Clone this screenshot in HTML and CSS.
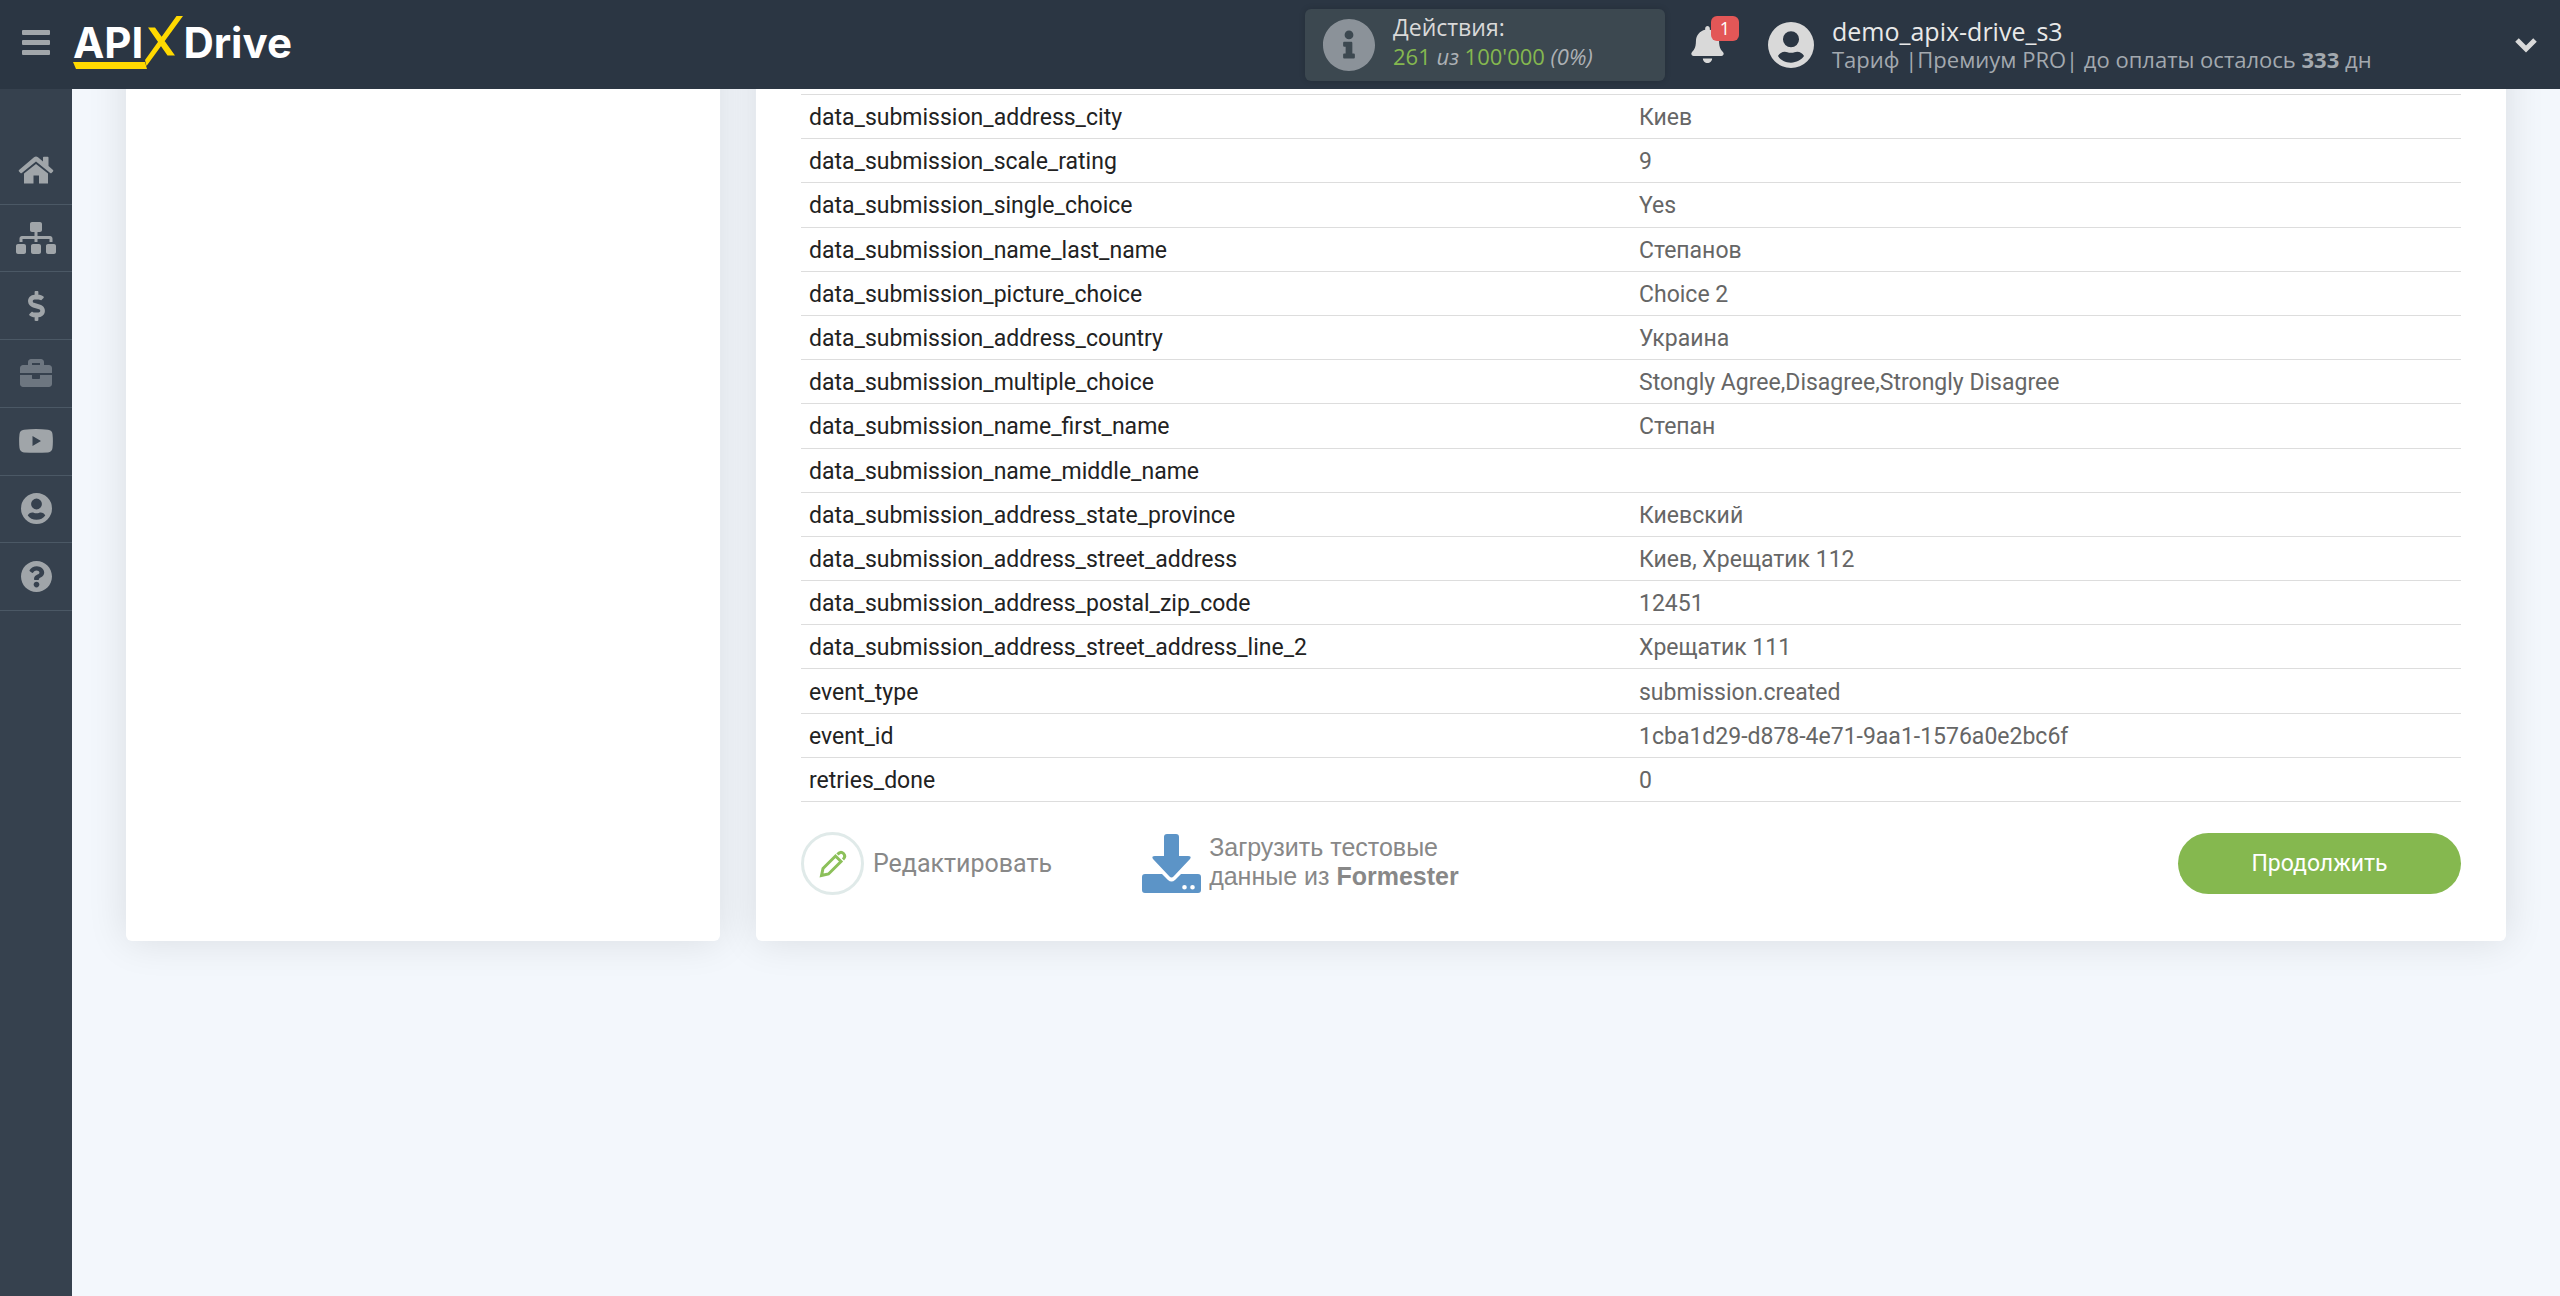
FILE: index.html
```html
<!DOCTYPE html>
<html lang="ru">
<head>
<meta charset="utf-8">
<title>ApiX-Drive</title>
<link rel="stylesheet" href="styles.css">
</head>
<body>
<header class="topbar">
  <button class="menu-toggle" type="button" aria-label="Меню"><span></span><span></span><span></span></button>
  <a class="logo" href="#">
    <span>API</span>
    <svg class="logo-x" width="40" height="56" viewBox="0 0 40 56" aria-hidden="true"><path d="M2 45L33.500 1H40L3.500 51ZM5 12.500H12L32 40.500H24.500Z"/></svg>
    <span>Drive</span>
    <svg class="logo-line" width="74" height="7" viewBox="0 0 74 7" aria-hidden="true"><path d="M0 0H72L74 7H3Z"/></svg>
  </a>
  <div class="quota">
    <svg width="52" height="52" viewBox="8 8 496 496" aria-hidden="true"><path d="M256 8C119.043 8 8 119.083 8 256c0 136.997 111.043 248 248 248s248-111.003 248-248C504 119.083 392.957 8 256 8zm0 110c23.196 0 42 18.804 42 42s-18.804 42-42 42-42-18.804-42-42 18.804-42 42-42zm56 254c0 6.627-5.373 12-12 12h-88c-6.627 0-12-5.373-12-12v-24c0-6.627 5.373-12 12-12h12v-64h-12c-6.627 0-12-5.373-12-12v-24c0-6.627 5.373-12 12-12h64c6.627 0 12 5.373 12 12v100h12c6.627 0 12 5.373 12 12v24z"/></svg>
    <div class="quota-text">
      <div class="quota-title">Действия:</div>
      <div class="quota-value"><b>261</b> из <b>100'000</b> (0%)</div>
    </div>
  </div>
  <button class="bell" type="button" aria-label="Уведомления">
    <svg width="33" height="37" viewBox="0 0 448 512" aria-hidden="true"><path d="M224 512c35.320 0 63.970-28.650 63.970-64H160.030c0 35.350 28.650 64 63.970 64zm215.390-149.710c-19.320-20.760-55.470-51.990-55.470-154.290 0-77.700-54.480-139.900-127.940-155.160V32c0-17.670-14.320-32-31.980-32s-31.980 14.330-31.980 32v20.840C118.560 68.100 64.080 130.300 64.080 208c0 102.300-36.150 133.530-55.470 154.290-6 6.450-8.660 14.160-8.610 21.710.11 16.400 12.980 32 32.100 32h383.800c19.120 0 32-15.600 32.100-32 .05-7.550-2.610-15.270-8.610-21.710z"/></svg>
    <span class="badge">1</span>
  </button>
  <div class="account">
    <svg width="46" height="46" viewBox="8 8 480 480" aria-hidden="true"><path fill-rule="evenodd" d="M248 8a240 240 0 1 0 0 480a240 240 0 1 0 0-480zM248 104a84 84 0 1 1 0 168a84 84 0 1 1 0-168zM248 432c-58 0-106-26-136-68c14-28 40-46 72-46c18 0 34 12 64 12s46-12 64-12c32 0 58 18 72 46c-30 42-78 68-136 68z"/></svg>
    <div class="account-text">
      <div class="account-name">demo_apix-drive_s3</div>
      <div class="account-plan">Тариф |Премиум PRO| до оплаты осталось <b>333</b> дн</div>
    </div>
  </div>
  <button class="expand" type="button" aria-label="Развернуть"><svg width="24" height="16" viewBox="0 0 24 16" aria-hidden="true"><path d="M3 3L12 12L21 3"/></svg></button>
</header>

<div class="layout">
  <nav class="sidebar" aria-label="Разделы">
    <ul>
      <li><a href="#" aria-label="Главная"><svg width="36" height="30" viewBox="0 0 36 30"><path d="M18 1.500Q19 1.500 20 2.300L25 6.500V2.500Q25 1.700 25.800 1.700H29.700Q30.500 1.700 30.500 2.500V11L35 15Q35.700 15.700 35 16.500L33.500 18Q32.900 18.500 32.200 18L18 6.500L3.800 18Q3.100 18.500 2.500 18L1 16.500Q.3 15.700 1 15L16 2.300Q17 1.500 18 1.500ZM18 9L30 18.500V28.500H21V20.500H15.500V28.500H6V18.500Z"/></svg></a></li>
      <li><a href="#" aria-label="Связи"><svg width="40" height="32" viewBox="0 0 640 512"><path d="M128 352H32c-17.670 0-32 14.330-32 32v96c0 17.670 14.330 32 32 32h96c17.670 0 32-14.330 32-32v-96c0-17.670-14.330-32-32-32zm-24-80h192v48h48v-48h192v48h48v-57.590c0-21.170-17.230-38.410-38.410-38.410H344v-64h40c17.670 0 32-14.330 32-32V32c0-17.670-14.330-32-32-32H256c-17.670 0-32 14.330-32 32v96c0 17.670 14.330 32 32 32h40v64H94.410C73.230 224 56 241.230 56 262.410V320h48v-48zm264 80h-96c-17.670 0-32 14.330-32 32v96c0 17.670 14.330 32 32 32h96c17.670 0 32-14.330 32-32v-96c0-17.670-14.330-32-32-32zm240 0h-96c-17.670 0-32 14.330-32 32v96c0 17.670 14.330 32 32 32h96c17.670 0 32-14.330 32-32v-96c0-17.670-14.330-32-32-32z"/></svg></a></li>
      <li><a href="#" aria-label="Оплата"><svg width="19" height="30" viewBox="0 0 288 512"><path d="M209.200 233.400l-108-31.600C88.700 198.200 80 186.500 80 173.500c0-16.300 13.200-29.500 29.500-29.500h66.300c12.200 0 24.200 3.700 34.200 10.500 6.100 4.100 14.300 3.100 19.500-2l34.800-34c7.100-6.900 6.100-18.400-1.800-24.500C238 74.800 207.400 64.100 176 64V16c0-8.800-7.200-16-16-16h-32c-8.800 0-16 7.200-16 16v48h-2.500C45.800 64-5.400 118.700.5 183.600c4.200 46.100 39.400 83.600 83.800 96.600l102.500 30c12.500 3.700 21.200 15.300 21.200 28.300 0 16.300-13.200 29.500-29.500 29.500h-66.300C100 368 88 364.300 78 357.500c-6.100-4.100-14.300-3.100-19.500 2l-34.800 34c-7.100 6.900-6.100 18.400 1.800 24.500 24.500 19.200 55.100 29.900 86.500 30v48c0 8.800 7.200 16 16 16h32c8.800 0 16-7.200 16-16v-48.200c46.600-.9 90.300-28.600 105.700-72.700 21.500-61.600-14.600-124.800-72.500-141.700z"/></svg></a></li>
      <li><a class="dim" href="#" aria-label="Бизнес"><svg width="32" height="32" viewBox="0 0 512 512"><path d="M320 336c0 8.840-7.160 16-16 16h-96c-8.840 0-16-7.160-16-16v-48H0v144c0 25.600 22.400 48 48 48h416c25.600 0 48-22.400 48-48V288H320v48zm144-208h-80V80c0-25.600-22.400-48-48-48H176c-25.600 0-48 22.400-48 48v48H48c-25.600 0-48 22.400-48 48v80h512v-80c0-25.600-22.400-48-48-48zm-144 0H192V96h128v32z"/></svg></a></li>
      <li><a href="#" aria-label="Видео"><svg width="34" height="24" viewBox="0 0 34 24"><path fill-rule="evenodd" d="M5 .7Q17-.5 29 .7Q33 1 33.500 5Q34.300 12 33.500 19Q33 23 29 23.400Q17 24.200 5 23.400Q1 23 .5 19Q-.3 12 .5 5Q1 1 5 .7ZM13.500 7V17L22 12Z"/></svg></a></li>
      <li><a href="#" aria-label="Профиль"><svg width="31" height="31" viewBox="8 8 480 480"><path fill-rule="evenodd" d="M248 8a240 240 0 1 0 0 480a240 240 0 1 0 0-480zM248 94a84 84 0 1 1 0 168a84 84 0 1 1 0-168zM248 424c-58 0-106-26-136-68c14-28 40-46 72-46c18 0 34 12 64 12s46-12 64-12c32 0 58 18 72 46c-30 42-78 68-136 68z"/></svg></a></li>
      <li><a href="#" aria-label="Помощь"><svg width="31" height="31" viewBox="8 8 496 496"><path d="M504 256c0 136.997-111.043 248-248 248S8 392.997 8 256C8 119.083 119.043 8 256 8s248 111.083 248 248zM262.655 90c-54.497 0-89.255 22.957-116.549 63.758-3.536 5.286-2.353 12.415 2.715 16.258l34.699 26.310c5.205 3.947 12.621 3.008 16.665-2.122 17.864-22.658 30.113-35.797 57.303-35.797 20.429 0 45.698 13.148 45.698 32.958 0 14.976-12.363 22.667-32.534 33.976C247.128 238.528 216 254.941 216 296v4c0 6.627 5.373 12 12 12h56c6.627 0 12-5.373 12-12v-1.333c0-28.462 83.186-29.647 83.186-106.667 0-58.002-60.165-102-116.531-102zM256 338c-25.365 0-46 20.635-46 46 0 25.364 20.635 46 46 46s46-20.636 46-46c0-25.365-20.635-46-46-46z"/></svg></a></li>
    </ul>
  </nav>

  <main class="content">
    <aside class="card"></aside>
    <section class="card card-main">
      <table class="fields">
        <tbody>
          <tr><th scope="row">data_submission_address_city</th><td>Киев</td></tr>
          <tr><th scope="row">data_submission_scale_rating</th><td>9</td></tr>
          <tr><th scope="row">data_submission_single_choice</th><td>Yes</td></tr>
          <tr><th scope="row">data_submission_name_last_name</th><td>Степанов</td></tr>
          <tr><th scope="row">data_submission_picture_choice</th><td>Choice 2</td></tr>
          <tr><th scope="row">data_submission_address_country</th><td>Украина</td></tr>
          <tr><th scope="row">data_submission_multiple_choice</th><td>Stongly Agree,Disagree,Strongly Disagree</td></tr>
          <tr><th scope="row">data_submission_name_first_name</th><td>Степан</td></tr>
          <tr><th scope="row">data_submission_name_middle_name</th><td></td></tr>
          <tr><th scope="row">data_submission_address_state_province</th><td>Киевский</td></tr>
          <tr><th scope="row">data_submission_address_street_address</th><td>Киев, Хрещатик 112</td></tr>
          <tr><th scope="row">data_submission_address_postal_zip_code</th><td>12451</td></tr>
          <tr><th scope="row">data_submission_address_street_address_line_2</th><td>Хрещатик 111</td></tr>
          <tr><th scope="row">event_type</th><td>submission.created</td></tr>
          <tr><th scope="row">event_id</th><td>1cba1d29-d878-4e71-9aa1-1576a0e2bc6f</td></tr>
          <tr><th scope="row">retries_done</th><td>0</td></tr>
        </tbody>
      </table>
      <div class="actions">
        <button class="edit" type="button">
          <span class="edit-icon"><svg width="28" height="28" viewBox="0 0 28 28" aria-hidden="true"><path d="M2.500 25.500L4 18.500L16.500 6L22 11.500L9.500 24ZM18.500 4.500Q21.500 .8 24.500 3.500Q27.200 6.500 24 9.500"/></svg></span>
          Редактировать
        </button>
        <button class="load" type="button">
          <svg width="59" height="59" viewBox="0 0 59 59" aria-hidden="true"><path fill-rule="evenodd" d="M25 0H34Q37 0 37 3V22H46Q50 22 48 25L31.500 42.500Q29.500 44.500 27.500 42.500L11 25Q9 22 13 22H22V3Q22 0 25 0ZM3 40H20L26 46Q29.500 49 33 46L39 40H56Q59 40 59 43V56Q59 59 56 59H3Q0 59 0 56V43Q0 40 3 40ZM42.500 51a2.300 2.300 0 1 0 0 4.600a2.300 2.300 0 1 0 0-4.600M50.500 51a2.300 2.300 0 1 0 0 4.600a2.300 2.300 0 1 0 0-4.600"/></svg>
          <span>Загрузить тестовые<br>данные из <b>Formester</b></span>
        </button>
        <button class="continue" type="button">Продолжить</button>
      </div>
    </section>
  </main>
</div>
</body>
</html>
```

FILE: styles.css
```css
* {
  box-sizing: border-box;
}

body {
  margin: 0;
  min-height: 100vh;
  display: flex;
  flex-direction: column;
  background: #f3f7fc;
  font-family: Roboto, "Liberation Sans", sans-serif;
  font-size: 23px;
}

button {
  padding: 0;
  border: 0;
  background: none;
  font: inherit;
  color: inherit;
  text-align: left;
}

svg {
  display: block;
  flex: none;
  fill: currentColor;
}

/* Top bar */
.topbar {
  position: sticky;
  top: 0;
  z-index: 2;
  display: flex;
  align-items: center;
  height: 89px;
  padding: 0 22px;
  background: #2b3643;
  font-family: "Open Sans", "Noto Sans", sans-serif;
  color: #d9d9d9;
}

.menu-toggle {
  display: grid;
  gap: 5px;
  width: 28px;
  margin: 0 23px 4px 0;
}

.menu-toggle span {
  height: 5px;
  border-radius: 1px;
  background: #a1a6aa;
}

.logo {
  position: relative;
  display: flex;
  align-items: center;
  margin-bottom: 4px;
  color: #fff;
  font: 700 42px/56px Inter, sans-serif;
  text-decoration: none;
}

.logo svg {
  fill: #ffd900;
}

.logo-line {
  position: absolute;
  left: 0;
  bottom: 2px;
}

.quota {
  display: flex;
  align-items: center;
  gap: 18px;
  width: 360px;
  height: 72px;
  margin-left: auto;
  padding: 0 18px;
  border-radius: 6px;
  background: #3c4850;
  box-shadow: 0 0 6px rgba(0, 0, 0, .15);
}

.quota svg {
  color: #8b9299;
}

.quota-text {
  margin-top: -5px;
  line-height: 29px;
}

.quota-title {
  font-size: 23px;
}

.quota-value {
  font-size: 22px;
  font-style: italic;
  color: #adb1b5;
}

.quota-value b {
  font-style: normal;
  font-weight: 400;
  color: #85b84f;
}

.bell {
  position: relative;
  margin: 0 44px 0 26px;
}

.badge {
  position: absolute;
  left: 20px;
  top: -10px;
  width: 28px;
  border-radius: 6px;
  background: #e35757;
  color: #fff;
  font-size: 18px;
  line-height: 25px;
  text-align: center;
}

.account {
  display: flex;
  align-items: center;
  gap: 18px;
  width: 746px;
}

.account-text {
  line-height: 28px;
}

.account-name {
  font-size: 25px;
  color: #e9e9e9;
}

.account-plan {
  font-size: 22px;
  color: #a3a9af;
}

.expand path {
  fill: none;
  stroke: #d9d9d9;
  stroke-width: 5;
}

/* Side navigation */
.layout {
  flex: 1;
  display: grid;
  grid-template-columns: 72px 1fr;
}

.sidebar {
  z-index: 1;
  background: #36414e;
}

.sidebar ul {
  display: grid;
  grid-auto-rows: 1fr;
  min-height: 474px;
  margin: 48px 0 0;
  padding: 0;
  list-style: none;
}

.sidebar li {
  display: grid;
  border-bottom: 1px solid #4b5865;
}

.sidebar a {
  display: grid;
  place-items: center;
  color: #a0a5a9;
}

.sidebar .dim {
  color: #6d7680;
}

/* Cards run up behind the top bar */
.content {
  display: grid;
  grid-template-columns: 297fr 875fr;
  align-self: start;
  gap: 36px;
  margin-top: -60px;
  padding: 0 54px 54px;
}

.card {
  border-radius: 6px;
  background: #fff;
  box-shadow: 0 0 40px rgba(0, 0, 0, .11);
}

.card-main {
  padding: 65px 45px 46px;
}

.fields {
  width: 100%;
  height: 708px;
  table-layout: fixed;
  border-collapse: collapse;
  border-top: 1px solid #ddd;
}

.fields tr {
  border-bottom: 1px solid #ddd;
}

.fields th,
.fields td {
  width: 50%;
  padding: 6px 8px 3px;
  line-height: 32px;
  text-align: left;
  font-weight: 400;
  color: #222;
}

.fields td {
  color: #666;
}

.actions {
  display: flex;
  align-items: center;
  margin-top: 30px;
  font-size: 25px;
  color: #888;
}

.edit {
  display: flex;
  align-items: center;
  gap: 9px;
  margin-right: 90px;
}

.edit-icon {
  display: grid;
  place-items: center;
  width: 63px;
  height: 63px;
  border: 3px solid #e0eae9;
  border-radius: 50%;
}

.edit-icon path {
  fill: none;
  stroke: #8cc05a;
  stroke-width: 3;
}

.load {
  display: flex;
  align-items: center;
  gap: 8px;
  font-family: "Liberation Sans", sans-serif;
  line-height: 29px;
}

.load span {
  padding-bottom: 4px;
}

.load svg {
  color: #5c94c7;
}

.continue {
  width: 283px;
  height: 61px;
  margin-left: auto;
  border-radius: 31px;
  background: #85b84f;
  color: #fff;
  font-size: 23px;
  text-align: center;
}
```
